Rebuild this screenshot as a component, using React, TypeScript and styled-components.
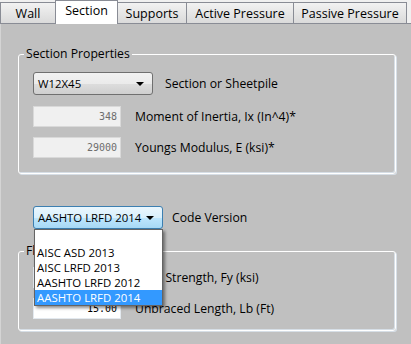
import styled, { createGlobalStyle } from "styled-components";

const GlobalStyle = createGlobalStyle`
	html, body {
		margin: 0;
		padding: 0;
		background: #f0f0f0;
	}
	body {
		font-family: "Open Sans", "Noto Sans", sans-serif;
		font-size: 12.2px;
		color: #000;
	}
`;

const tabs = ["Wall", "Section", "Supports", "Active Pressure", "Passive Pressure"];
const tabWidths = [56, 63, 70, 108, 114];

const codes = ["", "AISC ASD 2013", "AISC LRFD 2013", "AASHTO LRFD 2012", "AASHTO LRFD 2014"];

const App = () => {
	return (
		<Window>
			<GlobalStyle />
			<TabStrip>
				{tabs.map((t, idx) => (
					<Tab key={t} $active={t === "Section"} $w={tabWidths[idx]}>
						{t}
					</Tab>
				))}
			</TabStrip>
			<Panel>
				<Group>
					<Legend>Section Properties</Legend>
					<Row $gap={12}>
						<Combo $w={120}>
							<span>W12X45</span>
							<Arrow />
						</Combo>
						<span>Section or Sheetpile</span>
					</Row>
					<Row $gap={14} $top={11}>
						<NumBox $disabled>348</NumBox>
						<span>Moment of Inertia, Ix (In^4)*</span>
					</Row>
					<Row $gap={14} $top={10}>
						<NumBox $disabled>29000</NumBox>
						<span>Youngs Modulus, E (ksi)*</span>
					</Row>
				</Group>

				<CodeRow>
					<ComboWrap>
						<Combo $w={130} $focused>
							<span>AASHTO LRFD 2014</span>
							<Arrow />
						</Combo>
						<DropList>
							{codes.map((c, idx) => (
								<DropItem key={`code${idx}`} $selected={c === "AASHTO LRFD 2014"}>
									{c}
								</DropItem>
							))}
						</DropList>
					</ComboWrap>
					<span>Code Version</span>
				</CodeRow>

				<Group $second>
					<Legend>Flexural Properties</Legend>
					<Row $gap={14}>
						<NumBox>50.00</NumBox>
						<span>Yield Strength, Fy (ksi)</span>
					</Row>
					<Row $gap={14} $top={10}>
						<NumBox>15.00</NumBox>
						<span>Unbraced Length, Lb (Ft)</span>
					</Row>
				</Group>
			</Panel>
		</Window>
	);
};

const Window = styled.div`
	width: 411px;
	height: 344px;
	display: flex;
	flex-direction: column;
	overflow: hidden;
`;

const TabStrip = styled.div`
	display: flex;
	align-items: flex-end;
	height: 24px;
	box-sizing: border-box;
	border-bottom: 1px solid #898c95;
`;

const Tab = styled.div<{ $active?: boolean; $w: number }>`
	width: ${(p) => p.$w}px;
	height: ${(p) => (p.$active ? 24 : 21)}px;
	box-sizing: border-box;
	display: flex;
	align-items: center;
	justify-content: center;
	font-size: 12.5px;
	white-space: nowrap;
	border: 1px solid #898c95;
	border-bottom: none;
	margin-right: -1px;
	margin-bottom: ${(p) => (p.$active ? -1 : 0)}px;
	position: ${(p) => (p.$active ? "relative" : "static")};
	z-index: ${(p) => (p.$active ? 1 : 0)};
	padding-bottom: ${(p) => (p.$active ? 4 : 0)}px;
	background: ${(p) => (p.$active ? "#ffffff" : "linear-gradient(#f2f2f2, #dadada)")};
`;

const Panel = styled.div`
	flex: 1;
	background: #c0c0c0;
	border-left: 1px solid #d4d4d4;
	padding: 22px 15px 0 17px;
	display: flex;
	flex-direction: column;
`;

const Group = styled.fieldset<{ $second?: boolean }>`
	margin: 0;
	padding: ${(p) => (p.$second ? "8px 0 11px 14px" : "10px 0 15px 14px")};
	border: 1px solid #ffffff;
	border-radius: 3px;
	box-shadow: inset -1px -1px 0 #d6dee6, 1px 1px 0 #d6dee6;
	display: flex;
	flex-direction: column;
	min-width: 0;
`;

const Legend = styled.legend`
	padding: 0 2px;
	margin-left: -9px;
	line-height: 16px;
`;

const Row = styled.div<{ $gap: number; $top?: number }>`
	display: flex;
	align-items: center;
	gap: ${(p) => p.$gap}px;
	margin-top: ${(p) => p.$top || 0}px;
	white-space: nowrap;
`;

const Combo = styled.div<{ $w: number; $focused?: boolean }>`
	width: ${(p) => p.$w}px;
	height: 23px;
	box-sizing: border-box;
	display: flex;
	align-items: center;
	justify-content: space-between;
	padding: 0 8px 0 4px;
	font-size: 11.4px;
	white-space: nowrap;
	border: 1px solid ${(p) => (p.$focused ? "#3c7fb1" : "#707070")};
	border-radius: 3px;
	background: ${(p) =>
		p.$focused
			? "linear-gradient(#eaf6fd 0%, #d9f0fc 50%, #bee6fd 51%, #a7d9f5 100%)"
			: "linear-gradient(#f2f2f2 0%, #ebebeb 50%, #dddddd 51%, #cfcfcf 100%)"};
`;

const Arrow = styled.i`
	flex: none;
	width: 0;
	height: 0;
	border-left: 4px solid transparent;
	border-right: 4px solid transparent;
	border-top: 4px solid #000;
`;

const NumBox = styled.div<{ $disabled?: boolean }>`
	width: 88px;
	height: 21px;
	box-sizing: border-box;
	display: flex;
	align-items: center;
	justify-content: flex-end;
	padding-right: 3px;
	font-family: "DejaVu Sans Mono", "Liberation Mono", monospace;
	font-size: 10px;
	color: ${(p) => (p.$disabled ? "#6d6d6d" : "#000")};
	background: ${(p) => (p.$disabled ? "#f0f0f0" : "#ffffff")};
	border: 1px solid ${(p) => (p.$disabled ? "#d9d9d9" : "#e3e9ef")};
`;

const CodeRow = styled.div`
	display: flex;
	align-items: center;
	gap: 9px;
	margin: 32px 0 14px 15px;
	position: relative;
	z-index: 2;
	white-space: nowrap;
`;

const ComboWrap = styled.div`
	position: relative;
`;

const DropList = styled.div`
	position: absolute;
	top: 100%;
	left: 1px;
	width: 129px;
	box-sizing: border-box;
	background: #fff;
	border: 1px solid #646464;
	box-shadow: 2px 2px 3px rgba(0, 0, 0, 0.45);
`;

const DropItem = styled.div<{ $selected?: boolean }>`
	height: 15px;
	line-height: 15px;
	padding-left: 2px;
	font-size: 11.4px;
	white-space: nowrap;
	color: ${(p) => (p.$selected ? "#fff" : "#000")};
	background: ${(p) => (p.$selected ? "#3399ff" : "transparent")};
`;

export default App;
